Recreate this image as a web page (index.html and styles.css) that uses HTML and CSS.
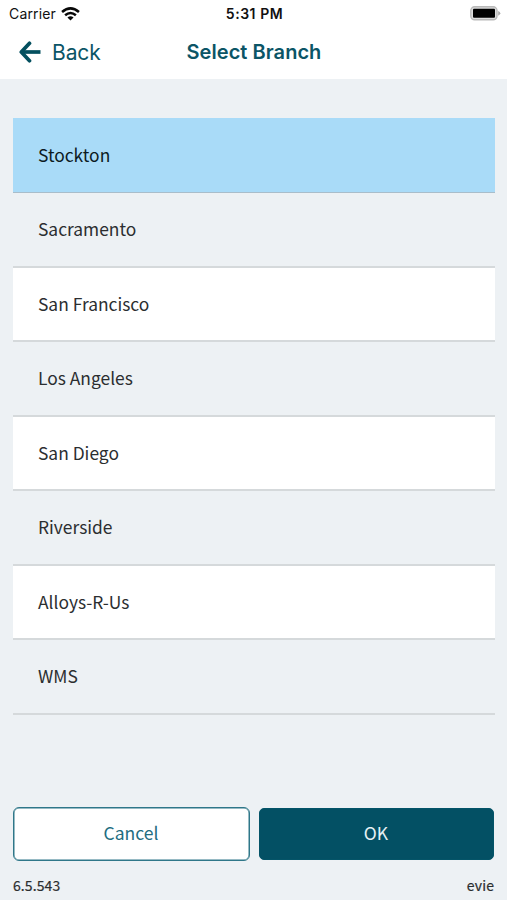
FILE: index.html
```html
<!DOCTYPE html>
<html lang="en">
<head>
<meta charset="utf-8">
<title>Select Branch</title>
<link rel="stylesheet" href="styles.css">
</head>
<body>
<header class="header">
  <div class="status">
    <div class="carrier"><span class="carrier-name">Carrier</span>
      <svg class="wifi" width="19" height="14" viewBox="0 0 18 13" fill="none" stroke="#080808" stroke-width="2.4"><path d="M1 4.6Q9-2.2 17 4.6M3.9 7.7Q9 3.4 14.1 7.7"/><path d="M9 12.7 6.1 9.8Q9 7.5 11.9 9.8Z" fill="#080808" stroke="none"/></svg>
    </div>
    <span class="time">5:31 PM</span>
    <svg class="battery" width="31" height="15" viewBox="0 0 31 15"><rect x=".8" y=".8" width="26.2" height="13" rx="3.8" fill="#ddd" stroke="#b9b9b9" stroke-width="1.4"/><rect x="3" y="2.8" width="22" height="9" rx="1" fill="#000"/><path d="M28.2 5Q30.3 6 30.3 7.3T28.2 9.7Z" fill="#aaa"/></svg>
  </div>
  <nav class="nav">
    <a class="back"><svg width="22" height="22" viewBox="0 0 22 22" fill="none" stroke="#04505f" stroke-width="3.7" stroke-linecap="round" stroke-linejoin="round"><path d="M10.5 2.3 2.3 11 10.5 19.7"/><path d="M3 11H21.5" stroke-linecap="butt"/></svg><span class="back-label">Back</span></a>
    <h1 class="title">Select Branch</h1>
  </nav>
</header>
<main class="content">
  <ul class="branches">
    <li class="branch selected">Stockton</li>
    <li class="branch">Sacramento</li>
    <li class="branch">San Francisco</li>
    <li class="branch">Los Angeles</li>
    <li class="branch">San Diego</li>
    <li class="branch">Riverside</li>
    <li class="branch">Alloys-R-Us</li>
    <li class="branch">WMS</li>
  </ul>
  <div class="actions">
    <button class="button cancel">Cancel</button>
    <button class="button ok">OK</button>
  </div>
  <footer class="footer"><span>6.5.543</span><span>evie</span></footer>
</main>
</body>
</html>
```
FILE: styles.css
```css
* { box-sizing: border-box; }
body {
  margin: 0;
  height: 900px;
  display: flex;
  flex-direction: column;
  overflow: hidden;
  background: #edf1f4;
  color: #2b2e30;
  font-family: "Noto Sans CJK SC", "Noto Sans", sans-serif;
}
.header {
  height: 79px;
  background: #fff;
  font-family: Inter, "Liberation Sans", sans-serif;
}
.status {
  height: 27px;
  display: grid;
  grid-template-columns: 1fr auto 1fr;
  align-items: center;
  padding: 0 6px 0 9px;
  font-size: 14px;
  color: #111;
}
.carrier { display: flex; align-items: center; gap: 5px; }
.carrier-name { letter-spacing: 0.15px; }
.time {
  font-weight: 600;
  font-size: 14px;
  letter-spacing: 0.55px;
  margin-right: 1px;
}
.battery { justify-self: end; }
.nav {
  height: 50px;
  display: grid;
  grid-template-columns: 1fr auto 1fr;
  align-items: center;
  padding: 0 18px 0 19px;
  color: #0b5566;
}
.back { display: flex; align-items: center; gap: 11px; font-size: 21px; }
.back-label { letter-spacing: -0.1px; }
.title {
  margin: 0;
  font-size: 20px;
  font-weight: 600;
  letter-spacing: 0.05px;
}
.content {
  flex: 1;
  display: flex;
  flex-direction: column;
  padding: 39px 12px 0 13px;
}
.branches { list-style: none; margin: 0; padding: 0; }
.branch {
  height: 74.5px;
  display: flex;
  align-items: center;
  padding: 0 0 1px 25px;
  border-bottom: 2px solid #d5d9db;
  font-size: 17.4px;
}
.branch:nth-child(odd) { padding-bottom: 0; background: #fff; }
.branch.selected {
  height: 75px;
  padding-bottom: 1px;
  background: #a9dbf8;
  border-bottom: 1px solid #a9bdca;
  color: #0c1a22;
}
.actions {
  display: flex;
  gap: 9px;
  margin-top: 92.5px;
  align-items: center;
}
.button {
  font: inherit;
  font-size: 17.5px;
  padding: 0 1px 3px 0;
  border-radius: 6px;
}
.cancel {
  width: 237px;
  height: 54px;
  background: #fff;
  border: 1px solid #2f7789;
  box-shadow: inset 0 0 0 0.5px #2f7789;
  color: #236c7f;
}
.ok {
  width: 235px;
  height: 52px;
  background: #035064;
  border: 1px solid #045468;
  border-radius: 5px;
  color: #e5f1f5;
}
.footer {
  display: flex;
  justify-content: space-between;
  padding-right: 1px;
  margin-top: 14px;
  font-size: 14px;
  line-height: 21px;
  letter-spacing: 0.1px;
  -webkit-text-stroke: 0.2px #2b2e30;
}
```
